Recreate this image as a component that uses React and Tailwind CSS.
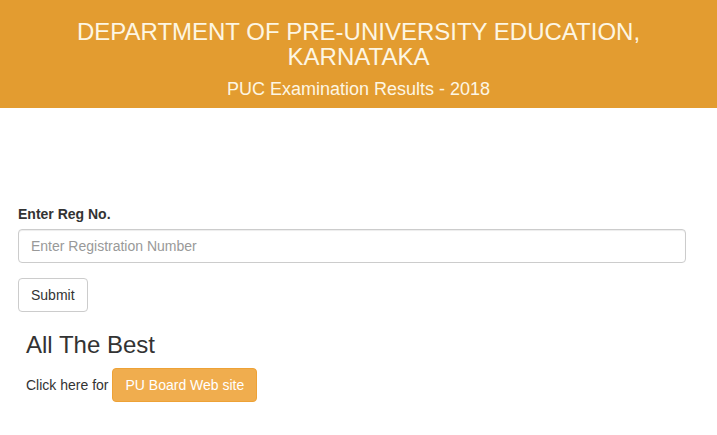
import React from "react";

export default function App() {
  return (
    <div className="min-h-screen bg-white text-[#333] text-[14px]" style={{ fontFamily: '"Liberation Sans", Arial, sans-serif' }}>
      {/* Header */}
      <div className="bg-[#e39c30] h-[108px] pt-[19px] text-center text-[#fdf6e3]">
        <h1 className="text-[24px] leading-[25px] font-normal">
          DEPARTMENT OF PRE-UNIVERSITY EDUCATION,
          <br />
          KARNATAKA
        </h1>
        <p className="text-[18px] leading-[20px] mt-[10px]">PUC Examination Results - 2018</p>
      </div>

      {/* Form */}
      <div className="px-[18px] pt-[96px]">
        <label className="block font-bold text-[14px] leading-[20px] mb-[5px]">Enter Reg No.</label>
        <input
          type="text"
          placeholder="Enter Registration Number"
          className="block w-[668px] h-[34px] px-[12px] border border-[#ccc] rounded-[4px] text-[14px] placeholder:text-[#999] shadow-[inset_0_1px_1px_rgba(0,0,0,0.075)] outline-none"
        />
        <button className="mt-[15px] h-[34px] px-[12px] border border-[#ccc] rounded-[4px] bg-white text-[14px] text-[#333]">
          Submit
        </button>
        <div className="px-[8px]">
          <h2 className="text-[24px] leading-[26px] mt-[20px] mb-[10px] font-normal">All The Best</h2>
          <div className="flex items-center gap-[4px]">
            <span>Click here for</span>
            <button className="h-[34px] px-[12px] rounded-[4px] bg-[#f0ad4e] border border-[#eea236] text-white text-[14px]">
              PU Board Web site
            </button>
          </div>
        </div>
      </div>
    </div>
  );
}
